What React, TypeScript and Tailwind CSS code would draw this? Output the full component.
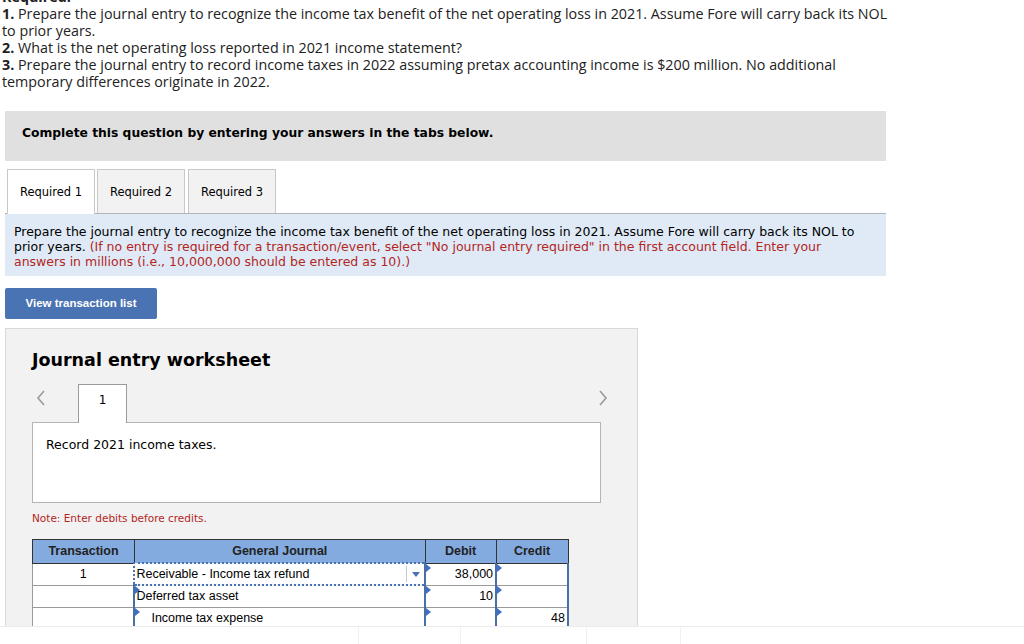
import React from "react";

const questions = [
  { n: "1.", text: " Prepare the journal entry to recognize the income tax benefit of the net operating loss in 2021. Assume Fore will carry back its NOL to prior years." },
  { n: "2.", text: " What is the net operating loss reported in 2021 income statement?" },
  { n: "3.", text: " Prepare the journal entry to record income taxes in 2022 assuming pretax accounting income is $200 million. No additional temporary differences originate in 2022." },
];

const rows = [
  { tx: "1", account: "Receivable - Income tax refund", indent: false, debit: "38,000", credit: "", focus: true },
  { tx: "", account: "Deferred tax asset", indent: false, debit: "10", credit: "", focus: false },
  { tx: "", account: "Income tax expense", indent: true, debit: "", credit: "48", focus: false },
];

function Flag() {
  return (
    <span className="absolute left-0 top-0 h-0 w-0 border-y-[4px] border-l-[5px] border-y-transparent border-l-[#3f6fc4]" />
  );
}

function Chevron({ dir }: { dir: "left" | "right" }) {
  return (
    <svg width="10" height="16" viewBox="0 0 10 16" className="text-[#9a9a9a]">
      <path
        d={dir === "left" ? "M8 1 L2 8 L8 15" : "M2 1 L8 8 L2 15"}
        fill="none"
        stroke="currentColor"
        strokeWidth="1.6"
      />
    </svg>
  );
}

export default function App() {
  return (
    <div className="relative h-[644px] w-[1024px] overflow-hidden bg-white text-black">
      <div className="h-[626px] overflow-hidden">
        <div className="-mt-[12px] w-[894px] pl-[2px] font-['Open_Sans',Arial,sans-serif] text-[14.3px] leading-[17px] text-[#222]">
          <p className="font-bold">Required:</p>
          {questions.map((q) => (
            <p key={q.n}>
              <span className="font-bold">{q.n}</span>
              {q.text}
            </p>
          ))}
        </div>

        <div className="font-['DejaVu_Sans',Verdana,sans-serif]">
          <div className="ml-[5px] mt-[21px] h-[50px] w-[881px] bg-[#e0e0e0] pl-[17px] pt-[14px] text-[12.3px] font-bold leading-[16px]">
            Complete this question by entering your answers in the tabs below.
          </div>

          <div className="ml-[7px] mt-[8px] flex gap-[2px]">
            <div className="relative z-10 -mb-px flex h-[45px] w-[88px] items-center justify-center border border-b-0 border-[#c8c8c8] bg-white pt-[2px] text-[11.5px]">
              Required 1
            </div>
            <div className="flex h-[44px] w-[88px] items-center justify-center border border-b-0 border-[#c8c8c8] bg-[#f2f2f2] pt-[2px] text-[11.5px]">
              Required 2
            </div>
            <div className="ml-px flex h-[44px] w-[88px] items-center justify-center border border-b-0 border-[#c8c8c8] bg-[#f2f2f2] pt-[2px] text-[11.5px]">
              Required 3
            </div>
          </div>

          <div className="ml-[5px] w-[881px] border-t border-[#b4b4b4] bg-[#dfeaf6] pb-[7px] pl-[9px] pr-[20px] pt-[10px] text-[12.5px] leading-[15px]">
            Prepare the journal entry to recognize the income tax benefit of the net operating loss in 2021. Assume Fore will carry back its NOL to prior years.{" "}
            <span className="text-[#b3261e]">
              (If no entry is required for a transaction/event, select "No journal entry required" in the first account field. Enter your answers in millions (i.e., 10,000,000 should be entered as 10).)
            </span>
          </div>

          <button className="ml-[5px] mt-[12px] h-[31px] w-[152px] rounded-[2px] bg-[#4a73b3] font-['Liberation_Sans',Arial,sans-serif] text-[11.5px] font-bold text-white">
            View transaction list
          </button>

          <div className="ml-[5px] mt-[9px] h-[320px] w-[633px] border border-[#d9d9d9] bg-[#f2f2f2] pl-[26px]">
            <h2 className="mt-[20px] text-[17.5px] font-bold leading-[22px]">Journal entry worksheet</h2>

            <div className="mt-[13px] flex items-end">
              <span className="mb-[16px] ml-[4px] w-[42px]">
                <Chevron dir="left" />
              </span>
              <div className="relative z-10 -mb-px flex h-[39px] w-[49px] justify-center border border-b-0 border-[#9a9a9a] bg-white pt-[6px] text-[12px]">
                1
              </div>
              <span className="mb-[16px] ml-auto mr-[29px]">
                <Chevron dir="right" />
              </span>
            </div>

            <div className="h-[81px] w-[569px] border border-[#b4b4b4] bg-white pl-[13px] pt-[13px] text-[12.5px]">
              Record 2021 income taxes.
            </div>

            <p className="mt-[8px] text-[10.5px] text-[#b3261e]">Note: Enter debits before credits.</p>

            <table className="mt-[12px] w-[537px] border-collapse font-['Liberation_Sans',Arial,sans-serif] text-[12.5px]">
              <thead>
                <tr className="h-[24px] bg-[#84abdf] font-bold text-[#222]">
                  <th className="w-[102px] border border-[#333]">Transaction</th>
                  <th className="w-[291px] border border-[#333]">General Journal</th>
                  <th className="w-[71px] border border-[#333]">Debit</th>
                  <th className="w-[72px] border border-[#333]">Credit</th>
                </tr>
              </thead>
              <tbody>
                {rows.map((r, i) => (
                  <tr key={i} className="h-[22px] bg-white">
                    <td className="border border-[#9a9a9a] text-center">{r.tx}</td>
                    <td
                      className={
                        r.focus
                          ? "relative border-2 border-dotted border-[#4a73b3] pl-[1px]"
                          : "relative border-x-2 border-y border-x-[#4a6fa5] border-y-[#9a9a9a] pl-[1px]"
                      }
                    >
                      {!r.focus && <Flag />}
                      <span className={r.indent ? "pl-[15px]" : ""}>{r.account}</span>
                      {r.focus && (
                        <span className="absolute right-[4px] top-[2px] flex h-[16px] items-center border-l border-[#c8c8c8] pl-[5px]">
                          <span className="h-0 w-0 border-x-[4px] border-t-[5px] border-x-transparent border-t-[#4a73b3]" />
                        </span>
                      )}
                    </td>
                    <td className="relative border-x-2 border-y border-x-[#4a6fa5] border-y-[#9a9a9a] pr-[2px] text-right">
                      <Flag />
                      {r.debit}
                    </td>
                    <td className="relative border-x-2 border-y border-x-[#4a6fa5] border-y-[#9a9a9a] pr-[2px] text-right">
                      <Flag />
                      {r.credit}
                    </td>
                  </tr>
                ))}
              </tbody>
            </table>
          </div>
        </div>
      </div>

      <div className="flex h-[18px] border-t border-[#ececec]">
        <div className="w-[358px]" />
        <div className="w-[102px] border-l border-[#f0f0f0]" />
        <div className="w-[126px] border-l border-[#f0f0f0]" />
        <div className="w-[94px] border-l border-[#f0f0f0]" />
        <div className="border-l border-[#f0f0f0]" />
      </div>
    </div>
  );
}
